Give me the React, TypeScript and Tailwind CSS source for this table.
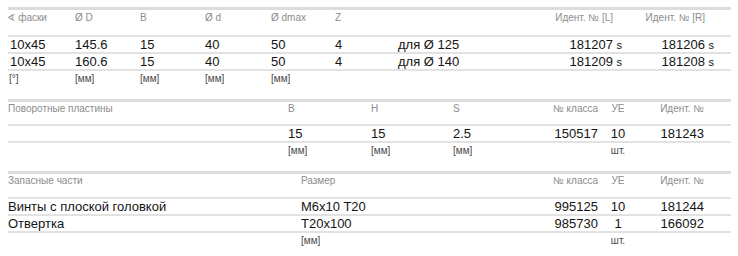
const font = { fontFamily: '"Liberation Sans", Arial, "DejaVu Sans", sans-serif' };

const head = "text-[10px] leading-[12px] text-[#8c8c8c]";
const val = "text-[13px] leading-[15px] text-[#141414]";
const unit = "text-[10px] leading-[16px] text-[#4a4a4a]";

const cols1 = "grid grid-cols-[65px_65px_65px_66px_64px_64px_150px_75px_92px_1fr]";
const cols2 = "grid grid-cols-[280px_83px_82px_75px_70px_6px_28px_72px_1fr]";
const cols3 = "grid grid-cols-[293px_227px_70px_6px_28px_72px_1fr]";

const chamfers = [
  { a: "10x45", D: "145.6", B: "15", d: "40", dmax: "50", z: "4", for: "для Ø 125", l: "181207", r: "181206" },
  { a: "10x45", D: "160.6", B: "15", d: "40", dmax: "50", z: "4", for: "для Ø 140", l: "181209", r: "181208" },
];

const spares = [
  { name: "Винты с плоской головкой", size: "M6x10 T20", cls: "995125", ue: "10", id: "181244" },
  { name: "Отвертка", size: "T20x100", cls: "985730", ue: "1", id: "166092" },
];

const CutterTable = () => (
  <div className="mt-[7px] border-t-[3px] border-[#dcdcdc]">
    <div className={`${cols1} ${head} h-[27px] pt-[2px] border-b-2 border-[#e2e2e2]`}>
      <div className="-ml-[1px]">∢ фаски</div>
      <div className="pl-[2px]">Ø D</div>
      <div className="pl-[2px]">B</div>
      <div className="pl-[2px]">Ø d</div>
      <div className="pl-[2px]">Ø dmax</div>
      <div className="pl-[2px]">Z</div>
      <div />
      <div className="text-right pr-[9px] whitespace-nowrap">Идент. № [L]</div>
      <div className="text-right pr-[9px]">Идент. № [R]</div>
      <div />
    </div>
    {chamfers.map((r) => (
      <div key={r.D} className={`${cols1} ${val} h-[17px] border-b-2 border-[#e2e2e2]`}>
        <div className="pl-[2px]">{r.a}</div>
        <div className="pl-[2px]">{r.D}</div>
        <div className="pl-[2px]">{r.B}</div>
        <div className="pl-[2px]">{r.d}</div>
        <div className="pl-[2px]">{r.dmax}</div>
        <div className="pl-[2px]">{r.z}</div>
        <div className="pl-[1px]">{r.for}</div>
        <div className="text-right whitespace-nowrap">
          {r.l} <span className="text-[11px]">s</span>
        </div>
        <div className="text-right whitespace-nowrap">
          {r.r} <span className="text-[11px]">s</span>
        </div>
        <div />
      </div>
    ))}
    <div className={`${cols1} ${unit} h-[16px]`}>
      <div className="pl-[1px]">[°]</div>
      <div className="pl-[2px]">[мм]</div>
      <div className="pl-[2px]">[мм]</div>
      <div className="pl-[2px]">[мм]</div>
      <div className="pl-[2px]">[мм]</div>
    </div>
  </div>
);

const InsertTable = () => (
  <div className="mt-[12px] border-t-[3px] border-[#dcdcdc]">
    <div className={`${cols2} ${head} h-[24px] pt-[1px] border-b-2 border-[#e2e2e2]`}>
      <div>Поворотные пластины</div>
      <div>B</div>
      <div>H</div>
      <div>S</div>
      <div className="text-right">№ класса</div>
      <div />
      <div className="text-center">УЕ</div>
      <div className="text-right">Идент. №</div>
      <div />
    </div>
    <div className={`${cols2} ${val} h-[17px] border-b-2 border-[#e2e2e2]`}>
      <div />
      <div>15</div>
      <div>15</div>
      <div>2.5</div>
      <div className="text-right">150517</div>
      <div />
      <div className="text-center">10</div>
      <div className="text-right">181243</div>
      <div />
    </div>
    <div className={`${cols2} ${unit} h-[16px]`}>
      <div />
      <div>[мм]</div>
      <div>[мм]</div>
      <div>[мм]</div>
      <div />
      <div />
      <div className="text-center">шт.</div>
    </div>
  </div>
);

const SpareTable = () => (
  <div className="mt-[12px] border-t-[3px] border-[#dcdcdc]">
    <div className={`${cols3} ${head} h-[25px] pt-[1px] border-b-2 border-[#e2e2e2]`}>
      <div>Запасные части</div>
      <div>Размер</div>
      <div className="text-right">№ класса</div>
      <div />
      <div className="text-center">УЕ</div>
      <div className="text-right">Идент. №</div>
      <div />
    </div>
    {spares.map((s) => (
      <div key={s.id} className={`${cols3} ${val} h-[17px] border-b-2 border-[#e2e2e2]`}>
        <div>{s.name}</div>
        <div>{s.size}</div>
        <div className="text-right">{s.cls}</div>
        <div />
        <div className="text-center">{s.ue}</div>
        <div className="text-right">{s.id}</div>
        <div />
      </div>
    ))}
    <div className={`${cols3} ${unit} h-[16px]`}>
      <div />
      <div>[мм]</div>
      <div />
      <div />
      <div className="text-center">шт.</div>
    </div>
  </div>
);

export default function App() {
  return (
    <div className="w-[738px] h-[256px] bg-white overflow-hidden" style={font}>
      <div className="ml-[8px] w-[723px]">
        <CutterTable />
        <InsertTable />
        <SpareTable />
      </div>
    </div>
  );
}
